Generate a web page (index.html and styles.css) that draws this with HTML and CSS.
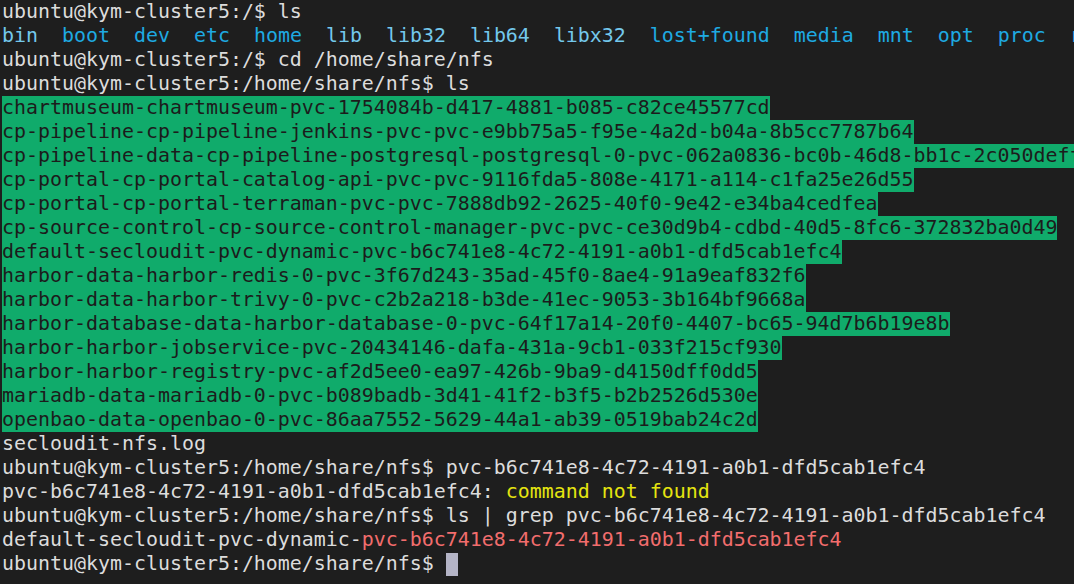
FILE: index.html
```html
<!DOCTYPE html>
<html lang="en">
<head>
<meta charset="utf-8">
<title>Terminal</title>
<link rel="stylesheet" href="styles.css">
</head>
<body>
<main class="term">
<div class="line">ubuntu@kym-cluster5:/$ ls</div>
<div class="line"><span class="ln">bin</span>  <span class="di">boot</span>  <span class="di">dev</span>  <span class="di">etc</span>  <span class="di">home</span>  <span class="ln">lib</span>  <span class="ln">lib32</span>  <span class="ln">lib64</span>  <span class="ln">libx32</span>  <span class="di">lost+found</span>  <span class="di">media</span>  <span class="di">mnt</span>  <span class="di">opt</span>  <span class="di">proc</span>  <span class="di">root</span></div>
<div class="line">ubuntu@kym-cluster5:/$ cd /home/share/nfs</div>
<div class="line">ubuntu@kym-cluster5:/home/share/nfs$ ls</div>
<div class="line"><span class="ow">chartmuseum-chartmuseum-pvc-1754084b-d417-4881-b085-c82ce45577cd</span></div>
<div class="line"><span class="ow">cp-pipeline-cp-pipeline-jenkins-pvc-pvc-e9bb75a5-f95e-4a2d-b04a-8b5cc7787b64</span></div>
<div class="line"><span class="ow">cp-pipeline-data-cp-pipeline-postgresql-postgresql-0-pvc-062a0836-bc0b-46d8-bb1c-2c050deff</span></div>
<div class="line"><span class="ow">cp-portal-cp-portal-catalog-api-pvc-pvc-9116fda5-808e-4171-a114-c1fa25e26d55</span></div>
<div class="line"><span class="ow">cp-portal-cp-portal-terraman-pvc-pvc-7888db92-2625-40f0-9e42-e34ba4cedfea</span></div>
<div class="line"><span class="ow">cp-source-control-cp-source-control-manager-pvc-pvc-ce30d9b4-cdbd-40d5-8fc6-372832ba0d49</span></div>
<div class="line"><span class="ow">default-secloudit-pvc-dynamic-pvc-b6c741e8-4c72-4191-a0b1-dfd5cab1efc4</span></div>
<div class="line"><span class="ow">harbor-data-harbor-redis-0-pvc-3f67d243-35ad-45f0-8ae4-91a9eaf832f6</span></div>
<div class="line"><span class="ow">harbor-data-harbor-trivy-0-pvc-c2b2a218-b3de-41ec-9053-3b164bf9668a</span></div>
<div class="line"><span class="ow">harbor-database-data-harbor-database-0-pvc-64f17a14-20f0-4407-bc65-94d7b6b19e8b</span></div>
<div class="line"><span class="ow">harbor-harbor-jobservice-pvc-20434146-dafa-431a-9cb1-033f215cf930</span></div>
<div class="line"><span class="ow">harbor-harbor-registry-pvc-af2d5ee0-ea97-426b-9ba9-d4150dff0dd5</span></div>
<div class="line"><span class="ow">mariadb-data-mariadb-0-pvc-b089badb-3d41-41f2-b3f5-b2b2526d530e</span></div>
<div class="line"><span class="ow">openbao-data-openbao-0-pvc-86aa7552-5629-44a1-ab39-0519bab24c2d</span></div>
<div class="line">secloudit-nfs.log</div>
<div class="line">ubuntu@kym-cluster5:/home/share/nfs$ pvc-b6c741e8-4c72-4191-a0b1-dfd5cab1efc4</div>
<div class="line">pvc-b6c741e8-4c72-4191-a0b1-dfd5cab1efc4: <span class="warn">command not found</span></div>
<div class="line">ubuntu@kym-cluster5:/home/share/nfs$ ls | grep pvc-b6c741e8-4c72-4191-a0b1-dfd5cab1efc4</div>
<div class="line">default-secloudit-pvc-dynamic-<span class="match">pvc-b6c741e8-4c72-4191-a0b1-dfd5cab1efc4</span></div>
<div class="line">ubuntu@kym-cluster5:/home/share/nfs$ <span class="cursor"></span></div>
</main>
</body>
</html>
```

FILE: styles.css
```css
html, body {
  margin: 0;
  padding: 0;
  background: #1e1e1e;
  width: 1074px;
  height: 584px;
  overflow: hidden;
}

.term {
  padding: 0 0 0 2px;
  font-family: "DejaVu Sans Mono", "Liberation Mono", monospace;
  font-size: 19.93px;
  color: #dcdcdc;
  overflow: hidden;
}

.line {
  height: 24px;
  line-height: 24px;
  white-space: pre;
}

.ln { color: #74c8ec; }
.di { color: #1eaae2; }

.ow {
  display: inline-block;
  height: 24px;
  line-height: 24px;
  vertical-align: top;
  background: #10ab6b;
  color: #1c1c1c;
}

.warn { color: #e5e510; }
.match { color: #f26d6d; }

.cursor {
  display: inline-block;
  width: 12px;
  height: 23px;
  margin-top: 1px;
  vertical-align: top;
  background: #b4b4c6;
}
```
